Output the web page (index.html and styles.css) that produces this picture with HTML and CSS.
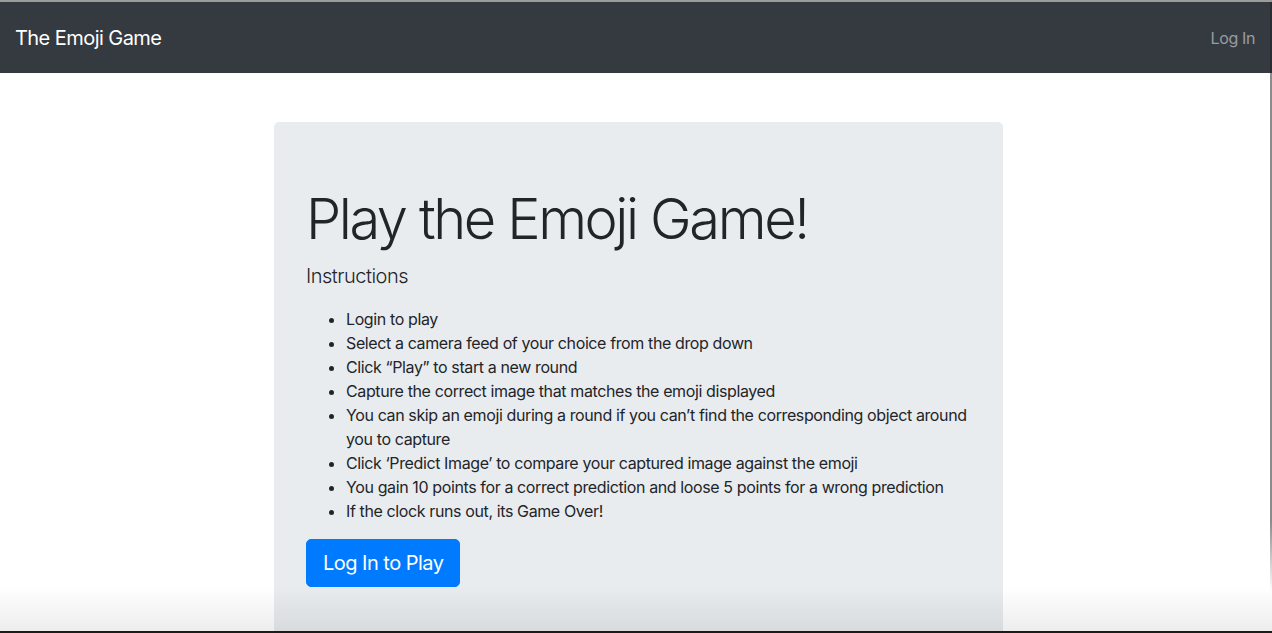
FILE: index.html
```html
<!DOCTYPE html>
<html lang="en">
<head>
<meta charset="utf-8">
<title>The Emoji Game</title>
<link rel="stylesheet" href="styles.css">
</head>
<body>
<nav class="navbar">
  <a class="brand" href="#">The Emoji Game</a>
  <a class="nav-link" href="#">Log In</a>
</nav>
<main class="main">
  <section class="jumbotron">
    <h1 class="display">Play the Emoji Game!</h1>
    <p class="lead">Instructions</p>
    <ul class="steps">
      <li>Login to play</li>
      <li>Select a camera feed of your choice from the drop down</li>
      <li>Click “Play” to start a new round</li>
      <li>Capture the correct image that matches the emoji displayed</li>
      <li>You can skip an emoji during a round if you can’t find the corresponding object around you to capture</li>
      <li>Click ‘Predict Image’ to compare your captured image against the emoji</li>
      <li>You gain 10 points for a correct prediction and loose 5 points for a wrong prediction</li>
      <li>If the clock runs out, its Game Over!</li>
    </ul>
    <button class="btn-primary" type="button">Log In to Play</button>
  </section>
</main>
<div class="edge-right"></div>
<div class="bottom-shade"></div>
</body>
</html>
```
FILE: styles.css
```css
html, body {
  margin: 0;
  padding: 0;
}
body {
  font-family: Inter, "Noto Sans", "Liberation Sans", sans-serif;
  color: #212529;
  background: #fff;
  border-top: 2px solid #9c9c9c;
  height: 900px;
  overflow: hidden;
  letter-spacing: -0.024em;
}
.navbar {
  height: 71px;
  background: #343a40;
  display: flex;
  align-items: center;
  justify-content: space-between;
  padding: 0 17px 0 15px;
}
.brand {
  color: #fff;
  font-size: 20px;
  text-decoration: none;
  line-height: 30px;
  letter-spacing: -0.028em;
}
.nav-link {
  color: rgba(255, 255, 255, 0.5);
  font-size: 16px;
  text-decoration: none;
  line-height: 24px;
}
.main {
  padding: 49px 0 0 274px;
}
.jumbotron {
  width: 729px;
  box-sizing: border-box;
  background: #e9ecef;
  border-radius: 5px;
  padding: 64px 32px;
}
.display {
  font-size: 56px;
  font-weight: 300;
  line-height: 1.2;
  margin: 0 0 8px;
  letter-spacing: -0.043em;
}
.lead {
  font-size: 20px;
  font-weight: 300;
  line-height: 30px;
  margin: 0 0 16px;
  letter-spacing: -0.025em;
}
.steps {
  margin: 0 0 16px;
  padding-left: 40px;
  font-size: 16px;
  line-height: 24px;
}
.btn-primary {
  font-family: inherit;
  font-size: 20px;
  line-height: 30px;
  padding: 8px 16px;
  border: 1px solid #007bff;
  background: #007bff;
  color: #fff;
  border-radius: 5px;
  letter-spacing: -0.026em;
}
.edge-right {
  position: fixed;
  top: 2px;
  right: 0;
  width: 2px;
  bottom: 0;
  background: linear-gradient(to bottom, #2a2e33 0, #2a2e33 71px, #8c8c8c 71px, #8c8c8c 520px, rgba(140,140,140,0) 590px);
}
.bottom-shade {
  position: fixed;
  left: 0;
  right: 0;
  bottom: 0;
  height: 46px;
  background: linear-gradient(to bottom, rgba(0,0,0,0) 0, rgba(0,0,0,0.07) 44px, #1e1a17 44px, #1e1a17 46px);
}
```
